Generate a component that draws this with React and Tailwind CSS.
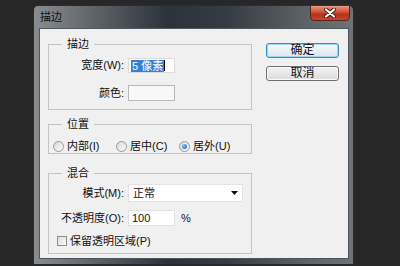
import React from 'react';

function Radio({ checked, label, hot }) {
  return (
    <label className="flex items-center w-[63px]">
      <span className="w-[11px] h-[11px] rounded-full border border-[#9a9a9a] bg-[linear-gradient(135deg,#d8d8d8,#fbfbfb)] flex items-center justify-center">
        {checked && <span className="w-[5px] h-[5px] rounded-full bg-[radial-gradient(circle_at_35%_35%,#7fc3ff,#0f5cb0)]" />}
      </span>
      <span className="ml-[3px]">
        {label}({hot})
      </span>
    </label>
  );
}

function Button({ children, primary }) {
  return (
    <button
      className={
        primary
          ? 'w-[73px] h-[15px] rounded-[3px] border border-[#3c8ac2] bg-[linear-gradient(#f4f8fb,#dfe6ec)] shadow-[inset_0_0_0_1px_#9fd6f5] text-[12px] leading-[13px] text-[#111]'
          : 'w-[73px] h-[15px] rounded-[3px] border border-[#707070] bg-[linear-gradient(#f3f3f3,#dadada)] shadow-[inset_0_0_0_1px_#fbfbfb] text-[12px] leading-[13px] text-[#111]'
      }
    >
      {children}
    </button>
  );
}

export default function App() {
  return (
    <div className="w-[400px] h-[266px] bg-[#272727] pl-[33px] pt-[5px] overflow-hidden font-['Liberation_Sans','Noto_Sans_CJK_SC',sans-serif] text-[11px] text-[#111]">
      <div className="w-[321px] h-[260px] rounded-t-[5px] border border-[#2a2e33] bg-[linear-gradient(90deg,#8a8d90_0%,#5c6166_20%,#2b323a_42%,#343b42_60%,#5d6266_85%,#6f7377_100%)] flex flex-col">
        <div className="h-[22px] flex justify-between items-start">
          <span className="pl-[6px] pt-[4px] text-[11px] leading-[14px] text-[#0d1117]">描边</span>
          <div className="mr-[3px] -mt-px w-[40px] h-[16px] rounded-b-[4px] border border-[#5b2418] bg-[linear-gradient(#e79a86,#cf4f34_45%,#b2341b_60%,#c4452a)] flex items-center justify-center">
            <svg width="12" height="10" viewBox="0 0 12 10">
              <path d="M2 1.5 L10 8.5 M10 1.5 L2 8.5" stroke="#4a1a10" strokeWidth="4" strokeLinecap="round" />
              <path d="M2 1.5 L10 8.5 M10 1.5 L2 8.5" stroke="#ffffff" strokeWidth="2.2" strokeLinecap="round" />
            </svg>
          </div>
        </div>
        <div className="ml-[5px] w-[310px] h-[231px] border border-[#4e555c] bg-[#f0f0f0] flex pl-[8px]">
          <div className="w-[204px]">
            <fieldset className="mt-[8px] pb-[8px] border border-[#c4c4c4]">
              <legend className="ml-[13px] px-[5px] leading-[14px]">描边</legend>
              <div className="mt-[7px] flex items-center h-[15px]">
                <span className="w-[75px] text-right">宽度(W):</span>
                <div className="ml-[4px] w-[47px] h-[15px] bg-white border border-[#dcdcdc] flex items-center pl-[2px]">
                  <span className="bg-[#3a7fd6] text-white leading-[12px] px-px">5 像素</span>
                  <span className="w-px h-[11px] bg-black" />
                </div>
              </div>
              <div className="mt-[12px] flex items-center h-[16px]">
                <span className="w-[75px] text-right">颜色:</span>
                <div className="ml-[4px] w-[47px] h-[16px] bg-[#f7f8fa] border border-[#b8b8b8]" />
              </div>
            </fieldset>

            <fieldset className="mt-[7px] border border-[#c4c4c4]">
              <legend className="ml-[13px] px-[5px] leading-[14px]">位置</legend>
              <div className="mt-[8px] h-[14px] pl-[4px] flex items-center">
                <Radio label="内部" hot="I" />
                <Radio label="居中" hot="C" />
                <Radio label="居外" hot="U" checked />
              </div>
            </fieldset>

            <fieldset className="mt-[12px] pb-[6px] border border-[#c4c4c4]">
              <legend className="ml-[13px] px-[5px] leading-[14px]">混合</legend>
              <div className="mt-[4px] flex items-center h-[18px]">
                <span className="w-[75px] text-right">模式(M):</span>
                <div className="ml-[4px] w-[115px] h-[18px] bg-white border border-[#e2e2e2] flex items-center justify-between pl-[4px] pr-[4px]">
                  <span>正常</span>
                  <svg width="7" height="4" viewBox="0 0 7 4">
                    <path d="M0 0 H7 L3.5 4 Z" fill="#111" />
                  </svg>
                </div>
              </div>
              <div className="mt-[8px] flex items-center h-[16px]">
                <span className="w-[75px] text-right">不透明度(O):</span>
                <div className="ml-[4px] w-[47px] h-[16px] bg-white border border-[#e2e2e2] flex items-center pl-[3px]">100</div>
                <span className="ml-[6px]">%</span>
              </div>
              <div className="mt-[9px] flex items-center h-[12px] pl-[8px]">
                <span className="w-[10px] h-[10px] border border-[#8e8e8e] bg-[linear-gradient(135deg,#dcdcdc,#fafafa)]" />
                <span className="ml-[3px]">保留透明区域(P)</span>
              </div>
            </fieldset>
          </div>

          <div className="ml-[14px] mt-[14px] flex flex-col gap-[8px]">
            <Button primary>确定</Button>
            <Button>取消</Button>
          </div>
        </div>
      </div>
    </div>
  );
}
